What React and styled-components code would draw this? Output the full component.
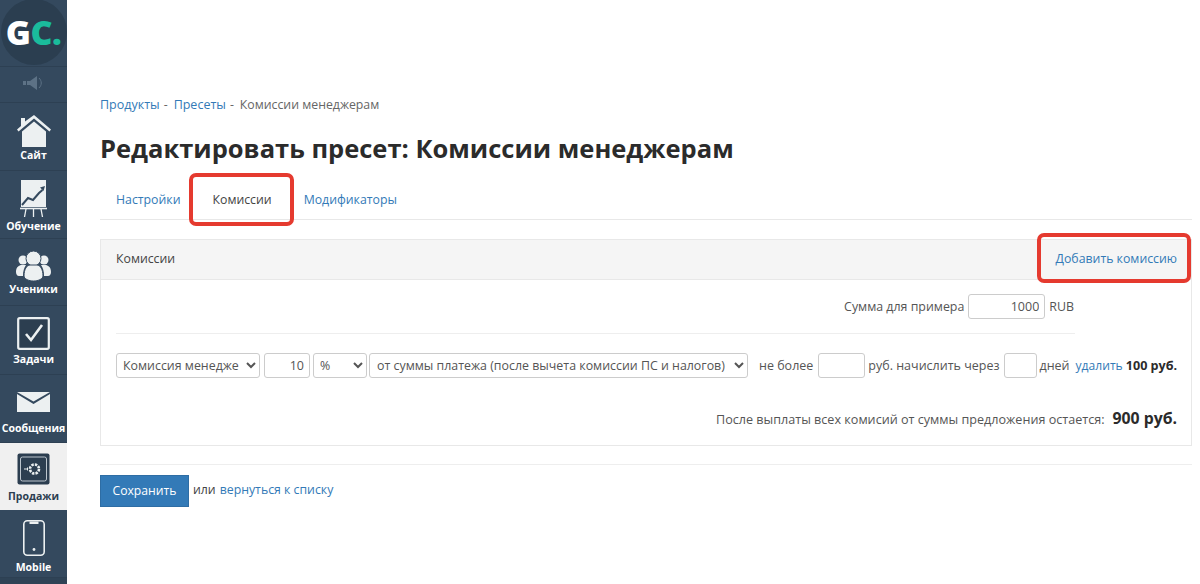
import React from 'react';
import styled, { createGlobalStyle } from 'styled-components';

const GlobalStyle = createGlobalStyle`
    html, body {
        margin: 0;
        padding: 0;
        background: #fff;
    }
    body {
        font-family: "Open Sans", "Liberation Sans", sans-serif;
        font-size: 13px;
        color: #333;
    }
`;

const Page = styled.div`
    display: flex;
    height: 584px;
    overflow: hidden;
`;

const Sidebar = styled.nav`
    width: 67px;
    flex: none;
    background: #2f4356;
    display: flex;
    flex-direction: column;
`;

const LogoBox = styled.div`
    height: 67px;
    flex: none;
    background: #34495e;
    display: flex;
    align-items: flex-start;
    justify-content: center;
    border-bottom: 1px solid #2d4053;
    box-sizing: border-box;
`;

const LogoCircle = styled.div`
    width: 66px;
    height: 66px;
    margin-top: -1px;
    border-radius: 50%;
    background: #2b3e50;
    display: flex;
    align-items: center;
    justify-content: center;
    font-weight: 800;
    font-size: 34px;
    letter-spacing: -0.5px;
    color: #fff;
    span {
        color: #1abc9c;
    }
`;

const Mute = styled.div`
    height: 36px;
    flex: none;
    padding-bottom: 4px;
    background: #34495e;
    border-bottom: 1px solid #2d4053;
    box-sizing: border-box;
    display: flex;
    align-items: center;
    justify-content: center;
`;

const NavItem = styled.a`
    height: ${p => p.$h}px;
    flex: none;
    box-sizing: border-box;
    background: ${p => (p.$active ? '#f0f0f0' : '#34495e')};
    color: ${p => (p.$active ? '#2c3e50' : '#fff')};
    border-bottom: 1px solid ${p => (p.$active ? '#f0f0f0' : '#2d4053')};
    display: flex;
    flex-direction: column;
    align-items: center;
    justify-content: flex-end;
    padding-bottom: ${p => p.$pb}px;
    font-size: 10.5px;
    font-weight: 700;
    line-height: 13px;
    white-space: nowrap;
    svg {
        display: block;
        margin-bottom: ${p => p.$gap}px;
    }
`;

const Main = styled.main`
    flex: none;
    width: 1092px;
    margin-left: 33px;
    padding-top: 96px;
`;

const Crumbs = styled.div`
    height: 17px;
    line-height: 17px;
    color: #666;
    font-size: 12.3px;
    display: flex;
    gap: 4px;
`;

const Link = styled.a`
    color: #337ab7;
    text-decoration: none;
`;

const CrumbLink = styled(Link)`
    font-size: 12.5px;
`;

const CrumbSep = styled.span`
    margin-right: 2px;
`;

const Title = styled.h1`
    margin: 17px 0 0;
    font-size: 25.5px;
    line-height: 36px;
    font-weight: 700;
    color: #2b2b2b;
`;

const Tabs = styled.div`
    display: flex;
    margin-top: 14px;
    padding-left: 1px;
    height: 40px;
    box-sizing: border-box;
    border-bottom: 1px solid #e8e8e8;
`;

const Tab = styled.a`
    position: relative;
    height: 39px;
    box-sizing: border-box;
    padding: 0 ${p => p.$pad}px;
    display: flex;
    align-items: center;
    color: ${p => (p.$active ? '#444' : '#337ab7')};
    font-size: 12.3px;
`;

const Highlight = styled.span`
    position: absolute;
    left: ${p => p.$l}px;
    right: ${p => p.$r}px;
    top: ${p => p.$t}px;
    bottom: ${p => p.$b}px;
    border: 4px solid #e53a2f;
    border-radius: 7px;
    pointer-events: none;
`;

const Panel = styled.section`
    margin-top: 19px;
    border: 1px solid #e8e8e8;
    height: 207px;
    box-sizing: border-box;
`;

const PanelHead = styled.header`
    height: 40px;
    background: #f5f5f5;
    border-bottom: 1px solid #e8e8e8;
    box-sizing: border-box;
    display: flex;
    align-items: center;
    justify-content: space-between;
    padding: 0 14px 2px 15px;
    color: #444;
    font-size: 12.3px;
`;

const AddLink = styled(Link)`
    position: relative;
`;

const PanelBody = styled.div`
    padding: 0 14px 0 15px;
`;

const SumRow = styled.div`
    width: 959px;
    height: 54px;
    box-sizing: border-box;
    border-bottom: 1px solid #eee;
    padding: 14px 1px 0 0;
    display: flex;
    justify-content: flex-end;
    align-items: flex-start;
    gap: 4px;
    color: #555;
    font-size: 12.4px;
    line-height: 25px;
`;

const Field = styled.input`
    width: ${p => p.$w}px;
    height: 25px;
    flex: none;
    box-sizing: border-box;
    border: 1px solid #ccc;
    border-radius: 3px;
    padding: 0 5px;
    text-align: right;
    font: inherit;
    font-size: 12.5px;
    color: #555;
    background: #fff;
`;

const Picker = styled.select`
    width: ${p => p.$w}px;
    height: 25px;
    flex: none;
    box-sizing: border-box;
    border: 1px solid #ccc;
    border-radius: 3px;
    padding: 0 2px 0 ${p => p.$pl || 2}px;
    font: inherit;
    font-size: 12.4px;
    color: #555;
    background: #fff;
`;

const RuleRow = styled.div`
    display: flex;
    align-items: center;
    margin-top: 19px;
    height: 25px;
    color: #555;
    font-size: 12.5px;
    white-space: nowrap;
`;

const Gap = styled.span`
    display: inline-block;
    flex: none;
    width: ${p => p.$w}px;
`;

const RemoveLink = styled(Link)`
    font-size: 12.1px;
`;

const Amount = styled.b`
    color: #2b2b2b;
    font-size: 12.6px;
`;

const Total = styled.div`
    display: flex;
    justify-content: flex-end;
    align-items: baseline;
    gap: 8px;
    margin-top: 29px;
    color: #555;
    font-size: 12.6px;
    b {
        font-size: 15.8px;
        color: #2b2b2b;
    }
`;

const Divider = styled.hr`
    margin: 18px 0 10px;
    border: 0;
    border-top: 1px solid #eee;
`;

const Actions = styled.div`
    display: flex;
    align-items: flex-start;
    gap: 4px;
    font-size: 12.3px;
    line-height: 30px;
    color: #444;
`;

const SaveButton = styled.button`
    width: 89px;
    height: 32px;
    border: 1px solid #2e6da4;
    background: #337ab7;
    color: #fff;
    font: inherit;
    font-size: 12.2px;
    padding: 0 0 2px;
`;

const ICON = '#ecf0f1';
const BG = '#34495e';

const HomeIcon = () => (
    <svg width="34" height="32" viewBox="0 0 34 32" fill={ICON}>
        <path d="M4 3h4v3.5L17 0l17 14.5-1.5 2L17 3.5 1.5 16.5 0 14.5l4-3.5z" />
        <path d="M17 6.5L29 16.5V32H5V16.5z" />
    </svg>
);

const ChartIcon = () => (
    <svg width="27" height="37" viewBox="0 0 27 37" fill="none">
        <rect x="1" y="0" width="25" height="27" fill={ICON} />
        <path d="M2 25l6-7 5 2 6-7 3.5-3" stroke={BG} strokeWidth="2" />
        <path d="M25 6l-5 1.5 3.5 3.5z" fill={BG} />
        <path d="M0 27.5h27" stroke={BG} strokeWidth="1" />
        <path d="M0 28.5h27" stroke={ICON} strokeWidth="1.6" />
        <path d="M6 29l-1.5 8M13.5 29v8M21 29l1.5 8" stroke={ICON} strokeWidth="1.3" />
    </svg>
);

const UsersIcon = () => (
    <svg width="35" height="30" viewBox="0 0 35 30" fill={ICON}>
        <circle cx="7" cy="9" r="4.5" />
        <circle cx="28" cy="9" r="4.5" />
        <path d="M0 21c0-5 3-7 6-7h4c-2 3-3 6-3 11H3c-2 0-3-2-3-4zM35 21c0-5-3-7-6-7h-4c2 3 3 6 3 11h4c2 0 3-2 3-4z" />
        <circle cx="17.5" cy="7.5" r="7.5" stroke={BG} />
        <path d="M8 25c0-7 3-11 6-11h7c3 0 6 4 6 11 0 3-5 5-9.500 5S8 28 8 25z" stroke={BG} />
    </svg>
);

const TaskIcon = () => (
    <svg width="33" height="33" viewBox="0 0 33 33" fill="none">
        <rect x="1.2" y="1.2" width="30.6" height="30.6" rx="1.5" stroke={ICON} strokeWidth="2.2" fill="#2c3e50" />
        <path d="M9 17l5 6L25 8" stroke={ICON} strokeWidth="2.6" />
    </svg>
);

const MailIcon = () => (
    <svg width="33" height="20" viewBox="0 0 33 20" fill={ICON}>
        <path d="M0 0h33L16.5 9.5z" />
        <path d="M0 2l16.5 10L33 2v18H0z" />
    </svg>
);

const SafeIcon = () => (
    <svg width="33" height="33" viewBox="0 0 33 33" fill="none">
        <rect x="0.5" y="0.5" width="32" height="31" rx="2" fill="#2c3e50" />
        <rect x="3.5" y="4" width="26" height="24" rx="2" stroke="#bcc5cd" strokeWidth="1" />
        <circle cx="17.5" cy="16" r="4.5" stroke={ICON} strokeWidth="2.6" strokeDasharray="2.4 1.1" />
        <path d="M7 16h4M10.500 14.500v3" stroke={ICON} strokeWidth="1" />
    </svg>
);

const PhoneIcon = () => (
    <svg width="22" height="36" viewBox="0 0 22 36" fill="none">
        <rect x="0.8" y="0.8" width="20.4" height="34.4" rx="3.5" stroke={ICON} strokeWidth="1.6" />
        <path d="M6.5 1.5h9V4h-9z" fill={ICON} />
        <circle cx="11" cy="29.5" r="1.4" fill={ICON} />
    </svg>
);

const SpeakerIcon = () => (
    <svg width="22" height="14" viewBox="0 0 22 14" fill="#5d7286">
        <rect x="0" y="5" width="3" height="4" />
        <path d="M4 5h3l7-5v14L7 9H4z" />
        <path d="M16 2c3 3 3 7 0 10" stroke="#5d7286" fill="none" />
    </svg>
);

const navItems = [
    { label: 'Сайт', icon: <HomeIcon />, h: 68, pb: 8, gap: 2 },
    { label: 'Обучение', icon: <ChartIcon />, h: 68, pb: 5, gap: 3 },
    { label: 'Ученики', icon: <UsersIcon />, h: 67, pb: 9, gap: 2 },
    { label: 'Задачи', icon: <TaskIcon />, h: 69, pb: 8, gap: 3 },
    { label: 'Сообщения', icon: <MailIcon />, h: 68, pb: 7, gap: 10 },
    { label: 'Продажи', icon: <SafeIcon />, h: 67, pb: 6, gap: 4, active: true },
    { label: 'Mobile', icon: <PhoneIcon />, h: 68, pb: 3, gap: 5 },
];

const App = () => (
    <>
        <GlobalStyle />
        <Page>
            <Sidebar>
                <LogoBox>
                    <LogoCircle>G<span>C.</span></LogoCircle>
                </LogoBox>
                <Mute><SpeakerIcon /></Mute>
                {navItems.map(item => (
                    <NavItem key={item.label} $h={item.h} $pb={item.pb} $gap={item.gap} $active={item.active}>
                        {item.icon}
                        {item.label}
                    </NavItem>
                ))}
            </Sidebar>
            <Main>
                <Crumbs>
                    <CrumbLink>Продукты</CrumbLink><CrumbSep>-</CrumbSep>
                    <CrumbLink>Пресеты</CrumbLink><CrumbSep>-</CrumbSep>
                    <span>Комиссии менеджерам</span>
                </Crumbs>
                <Title>Редактировать пресет: Комиссии менеджерам</Title>
                <Tabs>
                    <Tab $pad={15}>Настройки</Tab>
                    <Tab $active $pad={17}>
                        Комиссии
                        <Highlight $l={-7} $r={-5} $t={-7} $b={-7} />
                    </Tab>
                    <Tab $pad={15}>Модификаторы</Tab>
                </Tabs>
                <Panel>
                    <PanelHead>
                        Комиссии
                        <AddLink>
                            Добавить комиссию
                            <Highlight $l={-19} $r={-14} $t={-17} $b={-16} />
                        </AddLink>
                    </PanelHead>
                    <PanelBody>
                        <SumRow>
                            Сумма для примера
                            <Field $w={77} defaultValue="1000" />
                            RUB
                        </SumRow>
                        <RuleRow>
                            <Picker $w={144} defaultValue="m">
                                <option value="m">Комиссия менедже</option>
                            </Picker>
                            <Gap $w={4} />
                            <Field $w={46} defaultValue="10" />
                            <Gap $w={3} />
                            <Picker $w={54} defaultValue="p">
                                <option value="p">%</option>
                            </Picker>
                            <Gap $w={2} />
                            <Picker $w={379} $pl={3} defaultValue="s">
                                <option value="s">от суммы платежа (после вычета комиссии ПС и налогов)</option>
                            </Picker>
                            <Gap $w={11} />
                            не более
                            <Gap $w={5} />
                            <Field $w={47} />
                            <Gap $w={3} />
                            руб. начислить через
                            <Gap $w={4} />
                            <Field $w={33} />
                            <Gap $w={3} />
                            дней
                            <Gap $w={6} />
                            <RemoveLink>удалить</RemoveLink>
                            <Gap $w={3} />
                            <Amount>100 руб.</Amount>
                        </RuleRow>
                        <Total>
                            После выплаты всех комисий от суммы предложения остается:
                            <b>900 руб.</b>
                        </Total>
                    </PanelBody>
                </Panel>
                <Divider />
                <Actions>
                    <SaveButton>Сохранить</SaveButton>
                    или
                    <Link>вернуться к списку</Link>
                </Actions>
            </Main>
        </Page>
    </>
);

export default App;
